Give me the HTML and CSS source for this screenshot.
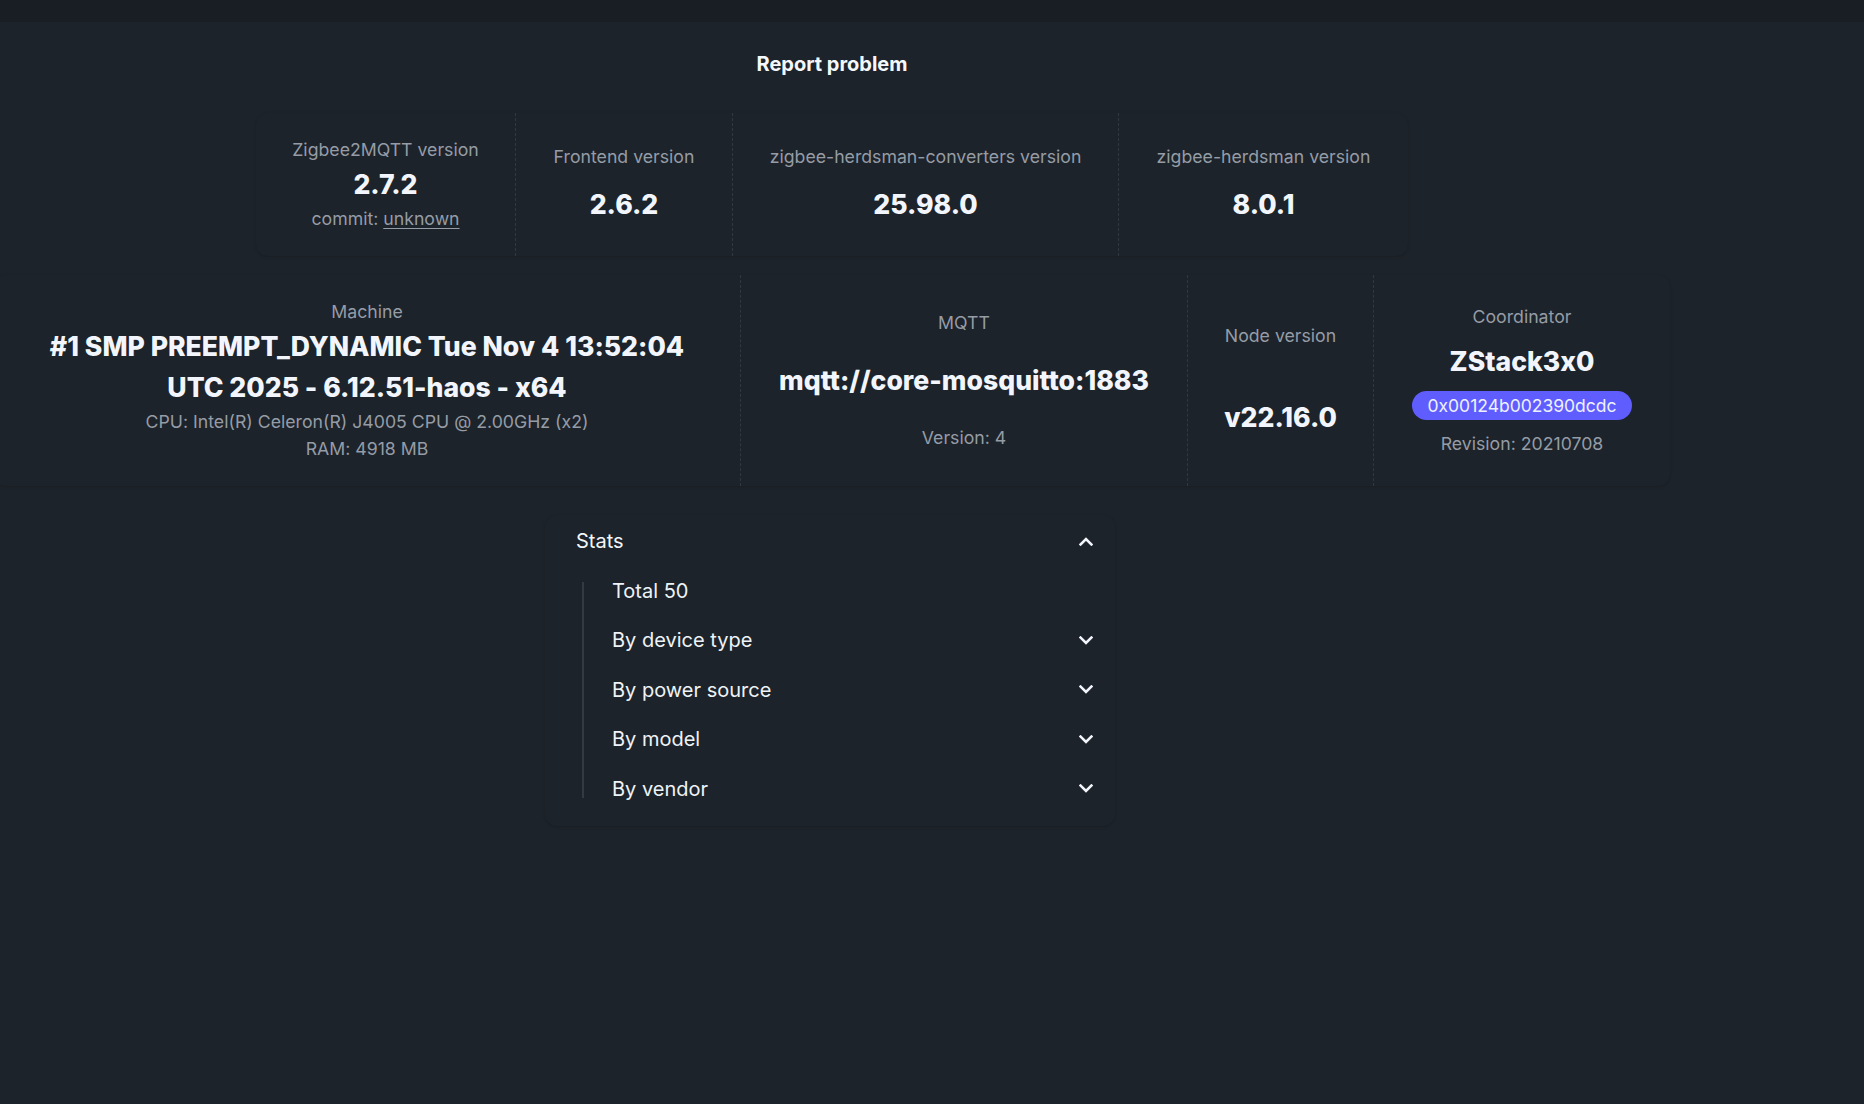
FILE: index.html
```html
<!DOCTYPE html>
<html lang="en">
<head>
<meta charset="utf-8">
<title>Zigbee2MQTT - Health</title>
<link rel="stylesheet" href="styles.css">
</head>
<body>
<div class="topbar"></div>
<main class="page">
  <div class="report"><a class="report-link">Report problem</a></div>

  <section class="stats stats-versions">
    <div class="stat">
      <div class="stat-title">Zigbee2MQTT version</div>
      <div class="stat-value">2.7.2</div>
      <div class="stat-desc">commit: <a class="link">unknown</a></div>
    </div>
    <div class="stat">
      <div class="stat-title">Frontend version</div>
      <div class="stat-value">2.6.2</div>
    </div>
    <div class="stat">
      <div class="stat-title">zigbee-herdsman-converters version</div>
      <div class="stat-value">25.98.0</div>
    </div>
    <div class="stat">
      <div class="stat-title">zigbee-herdsman version</div>
      <div class="stat-value">8.0.1</div>
    </div>
  </section>

  <section class="stats stats-system">
    <div class="stat stat-machine">
      <div class="stat-title">Machine</div>
      <div class="stat-value">#1 SMP PREEMPT_DYNAMIC Tue Nov 4 13:52:04 UTC 2025 - 6.12.51-haos - x64</div>
      <div class="stat-desc">CPU: Intel(R) Celeron(R) J4005 CPU @ 2.00GHz (x2)<br>RAM: 4918 MB</div>
    </div>
    <div class="stat">
      <div class="stat-title">MQTT</div>
      <div class="stat-value">mqtt://core-mosquitto:1883</div>
      <div class="stat-desc">Version: 4</div>
    </div>
    <div class="stat">
      <div class="stat-title">Node version</div>
      <div class="stat-value">v22.16.0</div>
    </div>
    <div class="stat">
      <div class="stat-title">Coordinator</div>
      <div class="stat-value">ZStack3x0</div>
      <div class="badge">0x00124b002390dcdc</div>
      <div class="stat-desc">Revision: 20210708</div>
    </div>
  </section>

  <section class="collapse">
    <div class="collapse-title">
      <span>Stats</span>
      <svg class="chev" width="14" height="9" viewBox="0 0 14 9"><path d="M1.6 7.4 L7 2 L12.4 7.4"/></svg>
    </div>
    <ul class="menu">
      <li><span>Total 50</span></li>
      <li><span>By device type</span><svg class="chev" width="14" height="9" viewBox="0 0 14 9"><path d="M1.6 1.6 L7 7 L12.4 1.6"/></svg></li>
      <li><span>By power source</span><svg class="chev" width="14" height="9" viewBox="0 0 14 9"><path d="M1.6 1.6 L7 7 L12.4 1.6"/></svg></li>
      <li><span>By model</span><svg class="chev" width="14" height="9" viewBox="0 0 14 9"><path d="M1.6 1.6 L7 7 L12.4 1.6"/></svg></li>
      <li><span>By vendor</span><svg class="chev" width="14" height="9" viewBox="0 0 14 9"><path d="M1.6 1.6 L7 7 L12.4 1.6"/></svg></li>
    </ul>
  </section>
</main>
</body>
</html>
```

FILE: styles.css
```css
* { box-sizing: border-box; }

html, body {
  margin: 0;
  padding: 0;
  background: #1d232a;
}

body {
  font-family: Inter, "Noto Sans", "Liberation Sans", sans-serif;
  font-feature-settings: "calt" 0;
  color: #ecf3fa;
  min-height: 1104px;
}

.topbar {
  height: 22px;
  background: #191e24;
}

.page {
  width: 1664px;
  display: flex;
  flex-direction: column;
  align-items: center;
}

.report {
  padding-top: 27px;
  line-height: 30px;
}

.report-link {
  font-size: 20px;
  font-weight: 700;
  color: #f4f8fc;
  cursor: pointer;
}

.stats {
  display: grid;
  grid-auto-flow: column;
  background: #1d232a;
  border-radius: 12px;
  box-shadow: 0 1px 3px rgba(0, 0, 0, 0.16);
}

.stats-versions {
  margin-top: 33px;
  grid-template-columns: 260px 217px 386px 289px;
}

.stats-system {
  margin-top: 19px;
  grid-template-columns: 747px 447px 186px 296px;
}

.stat {
  display: grid;
  grid-template-columns: 100%;
  align-items: center;
  justify-items: center;
  text-align: center;
  padding: 22px 20px 24px;
  border-right: 1px dashed rgba(236, 249, 255, 0.1);
}

.stat:last-child {
  border-right: 0;
}

.stat-title {
  font-size: 17.7px;
  line-height: 29px;
  color: #959ca6;
  white-space: nowrap;
}

.stat-value {
  font-size: 26.6px;
  line-height: 41px;
  font-weight: 800;
  color: #f2f6fc;
}

.stat-machine .stat-value {
  max-width: 670px;
}

.stat-desc {
  font-size: 17.7px;
  line-height: 27px;
  color: #959ca6;
}

.link {
  text-decoration: underline;
  text-underline-offset: 3px;
  cursor: pointer;
}

.badge {
  height: 29px;
  line-height: 29px;
  padding: 0 15px;
  border-radius: 999px;
  background: #605dff;
  color: #eef1ff;
  font-size: 17.5px;
}

.collapse {
  margin-top: 29px;
  margin-right: 4px;
  width: 570px;
  border-radius: 12px;
  background: #1d232a;
  box-shadow: 0 1px 3px rgba(0, 0, 0, 0.16);
  padding-bottom: 12px;
}

.collapse-title {
  display: flex;
  justify-content: space-between;
  align-items: center;
  padding: 11px 22px 0 31px;
  font-size: 20px;
  line-height: 30px;
  color: #f2f6fc;
}

.chev {
  display: block;
  fill: none;
  stroke: #f2f6fc;
  stroke-width: 2.6;
  stroke-linecap: square;
  stroke-linejoin: miter;
}

.menu {
  position: relative;
  list-style: none;
  margin: 10px 22px 0 37px;
  padding: 0 0 0 30px;
}

.menu::before {
  content: "";
  position: absolute;
  left: 0;
  top: 16px;
  bottom: 16px;
  width: 2px;
  background: #343a43;
}

.menu li {
  display: flex;
  justify-content: space-between;
  align-items: center;
  height: 49.5px;
  font-size: 20px;
  color: #eef3f8;
}
```
